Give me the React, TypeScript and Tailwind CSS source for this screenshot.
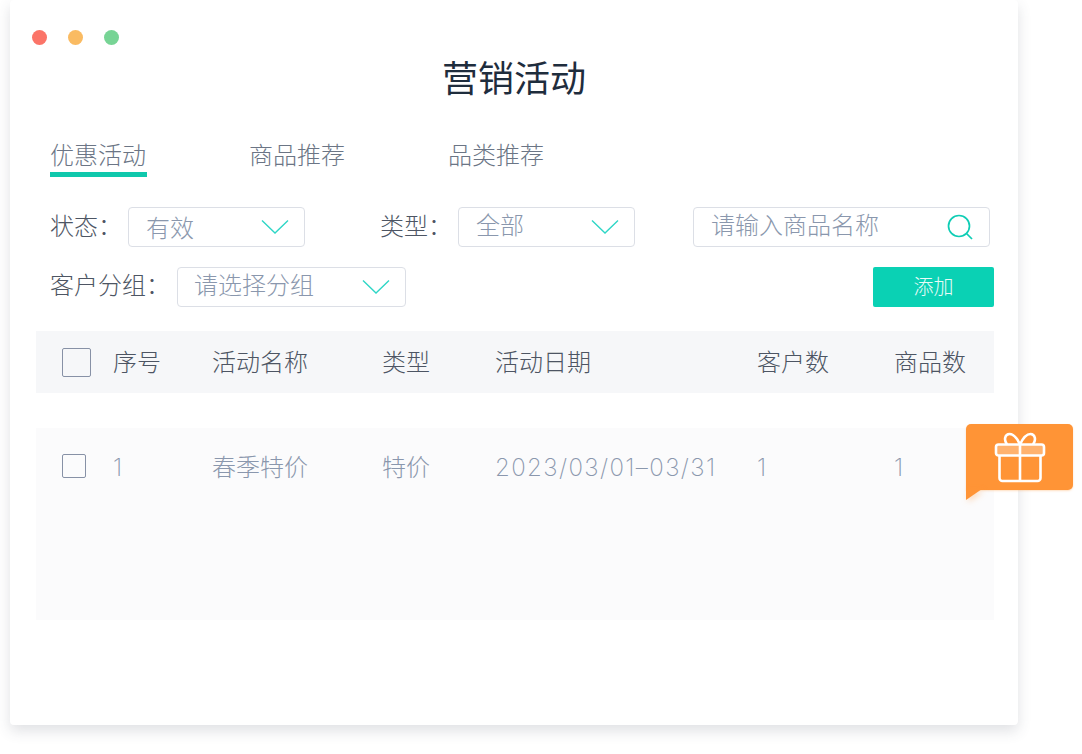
import React from 'react';

const FONT = 'font-["Inter","Noto_Sans_CJK_SC",sans-serif]';

const Chevron = () => (
  <svg width="28" height="16" viewBox="0 0 28 16" fill="none" className="shrink-0">
    <path d="M1 1.5 L14 14 L27 1.5" stroke="#2fd6c6" strokeWidth="1.4" />
  </svg>
);

const Select: React.FC<{ text: string; className: string; textClass?: string }> = ({ text, className, textClass = 'pb-[2px]' }) => (
  <div className={`h-10 flex items-center justify-between border border-[#dcdfe6] rounded-[4px] bg-white pr-[15px] ${className}`}>
    <span className={`text-[24px] leading-none font-light text-[#8a97ad] whitespace-nowrap ${textClass}`}>{text}</span>
    <Chevron />
  </div>
);

const Label: React.FC<{ text: string; className?: string }> = ({ text, className = '' }) => (
  <span className={`text-[24px] leading-none font-light text-[#4d5563] whitespace-nowrap ${className}`}>{text}</span>
);

const COLS = 'grid grid-cols-[77px_99px_170px_113px_262px_137px_1fr]';

export default function App() {
  return (
    <div className={`relative w-[1082px] h-[754px] bg-white overflow-hidden ${FONT}`}>
      <div className="w-[1008px] h-[725px] ml-[10px] bg-white rounded-[4px] shadow-[0_6px_14px_rgba(60,70,90,0.16)] flex flex-col">
        {/* title bar */}
        <div className="flex gap-[21px] pl-[22px] pt-[30px]">
          <span className="w-[15px] h-[15px] rounded-full bg-[#fb7468]" />
          <span className="w-[15px] h-[15px] rounded-full bg-[#fabb62]" />
          <span className="w-[15px] h-[15px] rounded-full bg-[#77d495]" />
        </div>
        <h1 className="mt-[7px] h-[54px] flex items-center justify-center text-[36px] font-normal leading-none text-[#1f2d3d]">营销活动</h1>

        {/* tabs */}
        <div className="flex pl-[40px] mt-[30px] h-[42px] text-[#6b7585]">
          <div className="flex flex-col items-start">
            <span className="h-[36px] pt-[4px] flex items-center text-[24px] leading-none font-light">优惠活动</span>
            <span className="w-[97px] h-[5px] bg-[#0fc8ac]" />
          </div>
          <span className="ml-[102px] h-[36px] pt-[4px] flex items-center text-[24px] leading-none font-light">商品推荐</span>
          <span className="ml-[103px] h-[36px] pt-[4px] flex items-center text-[24px] leading-none font-light">品类推荐</span>
        </div>

        {/* filters */}
        <div className="flex items-center pl-[40px] mt-[29px]">
          <Label text="状态：" className="w-[78px]" />
          <Select text="有效" className="w-[177px] pl-[17px]" textClass="pt-[4px]" />
          <Label text="类型：" className="w-[78px] ml-[75px]" />
          <Select text="全部" className="w-[177px] pl-[17px]" />
          <div className="ml-[58px] w-[297px] h-10 flex items-center justify-between border border-[#dcdfe6] rounded-[4px] pl-[17px] pr-[16px]">
            <span className="text-[24px] leading-none font-light text-[#8a97ad] whitespace-nowrap pb-[2px]">请输入商品名称</span>
            <svg width="26" height="26" viewBox="0 0 26 26" fill="none">
              <circle cx="12" cy="12" r="10.5" stroke="#0fcdb5" strokeWidth="1.7" />
              <path d="M19.5 19.5 L25 25" stroke="#0fcdb5" strokeWidth="1.7" />
            </svg>
          </div>
        </div>
        <div className="flex items-center pl-[40px] mt-[20px]">
          <Label text="客户分组：" className="w-[127px] pb-[2px]" />
          <Select text="请选择分组" className="w-[229px] pl-[16px]" />
          <button className="ml-[467px] w-[121px] h-10 bg-[#0ad1b4] rounded-[2px] text-[20px] leading-none font-light text-[#e9fbf7]">添加</button>
        </div>

        {/* table */}
        <div className="ml-[26px] w-[958px] mt-[24px]">
          <div className={`${COLS} items-center h-[62px] bg-[#f6f7f9] text-[24px] leading-[26px] font-light text-[#4d5563]`}>
            <span className="ml-[26px] w-[29px] h-[29px] border-[1.5px] border-[#8791a6] rounded-[2px]" />
            <span className="pt-[2px]">序号</span>
            <span className="pt-[2px]">活动名称</span>
            <span className="pt-[2px]">类型</span>
            <span className="pt-[2px]">活动日期</span>
            <span className="pt-[2px]">客户数</span>
            <span className="pt-[2px]">商品数</span>
          </div>
          <div className={`${COLS} mt-[35px] h-[192px] pt-[26px] items-start bg-[#fbfbfc] text-[24px] leading-[28px] font-light text-[#8a97ad]`}>
            <span className="ml-[26px] w-[24px] h-[24px] border-[1.5px] border-[#8791a6] rounded-[2px]" />
            <span className="font-extralight">1</span>
            <span>春季特价</span>
            <span>特价</span>
            <span className="font-extralight tracking-[1.4px] whitespace-nowrap">2023/03/01–03/31</span>
            <span className="font-extralight">1</span>
            <span className="font-extralight">1</span>
          </div>
        </div>
      </div>

      {/* gift badge */}
      <div className="absolute left-[966px] top-[424px] w-[107px] h-[66px] bg-[#ff9436] rounded-[5px] rounded-bl-none flex items-center justify-center shadow-[0_1px_2px_rgba(255,148,54,0.3)]">
        <svg width="52" height="52" viewBox="0 0 52 52" fill="none">
          <rect x="2" y="13.5" width="48" height="11" rx="2.5" fill="#ffb26e" stroke="#fff" strokeWidth="2.6" />
          <path d="M5.5 24.5 V47 a3 3 0 0 0 3 3 H43.5 a3 3 0 0 0 3-3 V24.5" stroke="#fff" strokeWidth="2.6" />
          <path d="M26 13.5 V50" stroke="#fff" strokeWidth="2.6" />
          <path d="M26 13.5 C23 7 19 3 15.5 3 C11 3 9.5 9 13 13.5 M26 13.5 C29 7 33 3 36.5 3 C41 3 42.5 9 39 13.5" stroke="#fff" strokeWidth="2.6" />
        </svg>
      </div>
      <svg className="absolute left-[965px] top-[489px] drop-shadow-[2px_2px_3px_rgba(255,148,54,0.35)]" width="18" height="12" viewBox="0 0 18 12">
        <path d="M1 0 H17 L1 11 Z" fill="#ff9436" />
      </svg>
    </div>
  );
}
